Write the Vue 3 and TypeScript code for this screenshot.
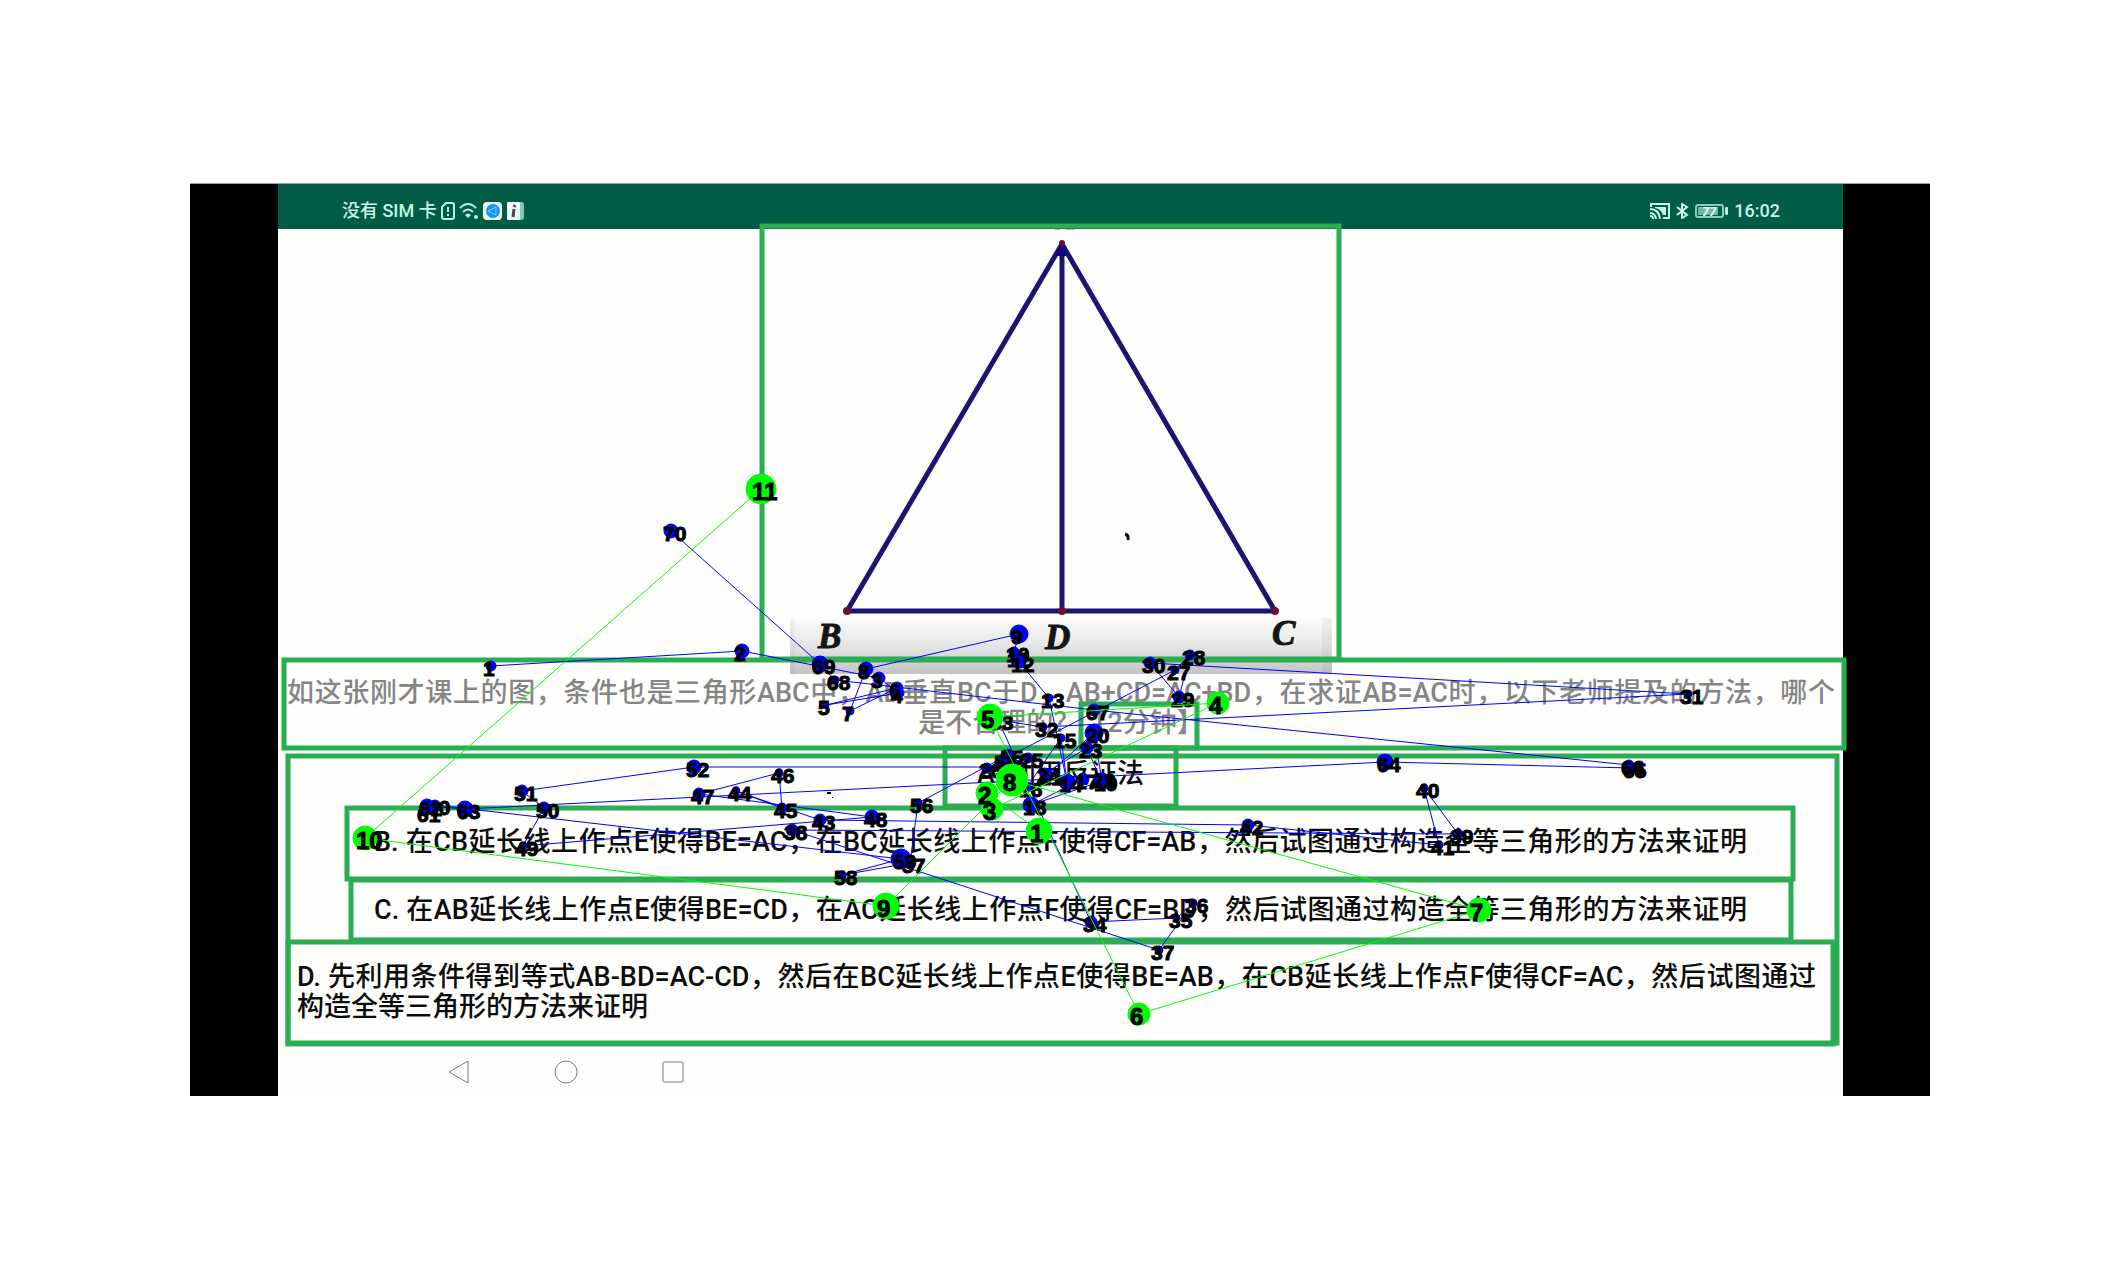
<script setup lang="ts">
interface Fixation {
  x: number
  y: number
  r: number
}

interface Area {
  name: string
  x: number
  y: number
  w: number
  h: number
}

interface Option {
  key: string
  lines: string[]
}

const toFixations = (rows: number[][]): Fixation[] => rows.map(([x, y, r]) => ({ x, y, r }))
const toPath = (items: Fixation[]): string => items.map((f) => `${f.x},${f.y}`).join(' ')

const questionLines: string[] = [
  '如这张刚才课上的图，条件也是三角形ABC中，AD垂直BC于D，AB+CD=AC+BD，在求证AB=AC时，以下老师提及的方法，哪个',
  '是不合理的？【2分钟】',
]

const options: Option[] = [
  { key: 'a', lines: ['A. 利用反证法'] },
  { key: 'b', lines: ['B. 在CB延长线上作点E使得BE=AC，在BC延长线上作点F使得CF=AB，然后试图通过构造全等三角形的方法来证明'] },
  { key: 'c', lines: ['C. 在AB延长线上作点E使得BE=CD，在AC延长线上作点F使得CF=BD，然后试图通过构造全等三角形的方法来证明'] },
  {
    key: 'd',
    lines: [
      'D. 先利用条件得到等式AB-BD=AC-CD，然后在BC延长线上作点E使得BE=AB，在CB延长线上作点F使得CF=AC，然后试图通过',
      '构造全等三角形的方法来证明',
    ],
  },
]

const areas: Area[] = [
  { name: 'figure', x: 762, y: 226, w: 577, h: 433 },
  { name: 'question', x: 284, y: 660, w: 1560, h: 88 },
  { name: 'time-limit', x: 1081, y: 704, w: 116, h: 44 },
  { name: 'options', x: 288, y: 756, w: 1549, h: 287 },
  { name: 'option-a', x: 945, y: 748, w: 231, h: 58 },
  { name: 'option-b', x: 347, y: 808, w: 1446, h: 71 },
  { name: 'option-c', x: 351, y: 880, w: 1440, h: 60 },
  { name: 'option-d', x: 288, y: 942, w: 1545, h: 102 },
]

const blue = toFixations([
  [491, 666, 5], [742, 651, 7], [879, 678, 6], [899, 693, 5], [826, 705, 3],
  [897, 688, 6], [850, 711, 4], [866, 669, 7], [1019, 634, 9], [1014, 652, 5],
  [1015, 657, 4], [1019, 662, 6], [1049, 698, 4], [1067, 782, 8], [1061, 738, 4],
  [1027, 787, 5], [1083, 779, 6], [1031, 805, 8], [1102, 781, 8], [1094, 733, 9],
  [1047, 775, 6], [1100, 778, 5], [1087, 748, 6], [1045, 773, 5], [1028, 758, 5],
  [987, 768, 5], [1175, 670, 4], [1190, 655, 5], [1179, 697, 6], [1150, 663, 6],
  [1688, 694, 4], [1043, 727, 4], [998, 720, 4], [1091, 922, 6], [1177, 918, 3],
  [1193, 903, 4], [1159, 950, 4], [792, 830, 6], [1458, 834, 5], [1424, 788, 4],
  [1439, 845, 4], [1248, 825, 6], [820, 820, 6], [736, 791, 4], [782, 808, 5],
  [779, 773, 4], [699, 794, 6], [872, 817, 7], [523, 846, 4], [544, 808, 6],
  [522, 791, 6], [694, 767, 7], [1004, 767, 5], [1002, 760, 5], [1008, 755, 6],
  [918, 803, 4], [910, 863, 4], [842, 875, 4], [901, 859, 10], [435, 805, 5],
  [425, 812, 4], [427, 806, 7], [465, 809, 8], [1385, 762, 8], [1631, 768, 5],
  [1629, 765, 5], [1094, 710, 6], [835, 680, 4], [820, 664, 8], [671, 531, 7],
])

const green = toFixations([
  [1039, 831, 13], [987, 793, 11], [992, 809, 11], [1218, 703, 11], [990, 717, 13],
  [1139, 1014, 11], [1479, 910, 12], [1012, 780, 16], [886, 906, 13], [365, 838, 12],
  [761, 489, 15],
])
</script>

<template>
  <main class="page">
    <div class="device">
      <section class="screen">
        <header class="status">
          <div class="status-group left">
            <span>没有 SIM 卡</span>
            <svg width="14" height="18" viewBox="0 0 14 18" fill="none" stroke="#b9f0de" stroke-width="2">
              <path d="M5 1h6a2 2 0 0 1 2 2v12a2 2 0 0 1-2 2H3a2 2 0 0 1-2-2V5z" />
              <path d="M7 5v5M7 12v2" />
            </svg>
            <svg width="20" height="18" viewBox="0 0 20 18" fill="none" stroke="#b9f0de" stroke-width="2">
              <path d="M1 6q8-8 16 0M4 10q5-5 10 0" />
              <path d="M6 13q3-3 6 0l-3 3z" fill="#b9f0de" stroke="none" />
              <circle cx="17" cy="15" r="2" fill="#b9f0de" stroke="none" />
            </svg>
            <svg width="19" height="18" viewBox="0 0 19 18">
              <rect width="19" height="18" rx="4" fill="#effffb" />
              <circle cx="10" cy="9" r="7" fill="#1593f2" />
              <path d="M5 9l8-4v8z" fill="none" stroke="#7fd6ff" stroke-width="1" />
            </svg>
            <svg width="18" height="18" viewBox="0 0 18 18">
              <rect x="3" width="15" height="18" rx="3" fill="#7fcbb5" />
              <rect x="1" width="13" height="18" rx="1" fill="#effffb" />
              <path d="M9 3l-1 2M8 7l-1 8" stroke="#3d4d48" stroke-width="3" />
            </svg>
          </div>
          <div class="status-group right">
            <svg width="20" height="16" viewBox="0 0 20 16" fill="none" stroke="#c6f5e6" stroke-width="2">
              <path d="M1 4V1h18v14h-6" />
              <path d="M5 4h11v8h-3Q11 6 5 5z" fill="#c6f5e6" stroke="none" />
              <path d="M0 6q9 0 10 10M0 10q5 0 6 6M0 13q3 0 3 3" />
            </svg>
            <svg width="13" height="16" viewBox="0 0 13 16" fill="none" stroke="#c6f5e6" stroke-width="2">
              <path d="M1 4l10 8-5 3V1l5 3L1 12" />
            </svg>
            <svg class="battery" width="33" height="14" viewBox="0 0 33 14">
              <rect x="1" y="1" width="27" height="12" rx="2" fill="none" stroke="#8bd0bb" stroke-width="2" />
              <rect x="3" y="3" width="20" height="8" fill="#72b9a5" />
              <rect x="30" y="3" width="3" height="8" rx="1" fill="#b9f0de" />
              <text x="7" y="12" class="battery-level">77</text>
            </svg>
            <time>16:02</time>
          </div>
        </header>

        <figure class="figure">
          <svg viewBox="790 229 542 445" role="img" aria-label="三角形ABC">
            <defs>
              <linearGradient id="shade" x1="0" y1="0" x2="0" y2="1">
                <stop offset="0" stop-color="#fefefd" />
                <stop offset="0.500" stop-color="#e8e7e7" />
                <stop offset="1" stop-color="#c4c2c2" />
              </linearGradient>
            </defs>
            <rect x="790" y="614" width="542" height="60" fill="url(#shade)" />
            <rect x="790" y="618" width="5" height="56" fill="#000" opacity="0.030" />
            <rect x="1322" y="618" width="10" height="56" fill="#000" opacity="0.040" />
            <path d="M1055 229h5M1066 229h9" stroke="#777" stroke-width="1" />
            <g class="edges">
              <path d="M1062 244L847 611H1275Z" />
              <path d="M1062 244V611" />
            </g>
            <path d="M1062 241l6 15h-12z" fill="#0c0880" />
            <g fill="#6b1030">
              <circle cx="1062" cy="243" r="3" />
              <circle cx="847" cy="611" r="4" />
              <circle cx="1062" cy="611" r="4" />
              <circle cx="1275" cy="611" r="4" />
            </g>
            <path d="M1125 534q4 1 3 6" fill="none" stroke="#111" stroke-width="3" />
            <text class="vertex" x="818" y="648">B</text>
            <text class="vertex" x="1045" y="649">D</text>
            <text class="vertex" x="1272" y="645">C</text>
          </svg>
        </figure>

        <h1 class="question">
          <span v-for="(line, i) in questionLines" :key="i" class="line">{{ line }}</span>
        </h1>

        <div class="options">
          <button v-for="option in options" :key="option.key" type="button" class="option" :class="option.key">
            <span v-for="(line, i) in option.lines" :key="i" class="line">{{ line }}</span>
          </button>
        </div>

        <nav class="nav">
          <button type="button" aria-label="返回">
            <svg width="24" height="24" viewBox="0 0 24 24"><path d="M21 1v22L2 12z" /></svg>
          </button>
          <button type="button" aria-label="主页">
            <svg width="24" height="24" viewBox="0 0 24 24"><circle cx="12" cy="12" r="11" /></svg>
          </button>
          <button type="button" aria-label="最近任务">
            <svg width="24" height="24" viewBox="0 0 24 24"><rect x="2" y="2" width="20" height="20" rx="1" /></svg>
          </button>
        </nav>
      </section>

      <svg class="gaze" viewBox="190 184 1740 912">
        <rect v-for="area in areas" :key="area.name" class="area" :x="area.x" :y="area.y" :width="area.w" :height="area.h" />
        <path d="M827 792h4v2h-4zM832 797h1v1h-1z" />
        <polyline class="trail blue" :points="toPath(blue)" />
        <g v-for="(f, i) in blue" :key="`b${i}`">
          <circle class="blue" :cx="f.x" :cy="f.y" :r="f.r" />
          <text :x="f.x - 8" :y="f.y + 10">{{ i + 1 }}</text>
        </g>
        <g class="large">
          <circle v-for="(f, i) in green" :key="`c${i}`" class="green" :cx="f.x" :cy="f.y" :r="f.r" />
          <polyline class="trail green" :points="toPath(green)" />
          <text v-for="(f, i) in green" :key="`g${i}`" :x="f.x - 9" :y="f.y + 11">{{ i + 1 }}</text>
        </g>
      </svg>
    </div>
  </main>
</template>

<style>
body {
  background: #fff;
}
</style>

<style scoped>
.page {
  padding: 184px 190px;
  font-family: Roboto, "Noto Sans CJK SC", sans-serif;
}

.device {
  position: relative;
  padding: 0 87px 0 88px;
  background: #000;
  box-shadow: 0 -1px #a0a0a0;
}

.screen {
  background: #fefefd;
}

.status {
  display: flex;
  align-items: center;
  justify-content: space-between;
  box-sizing: border-box;
  height: 45px;
  padding: 8px 63px 0 64px;
  background: #005c45;
  color: #c6f5e6;
  font-size: 18px;
  font-weight: 500;
  line-height: 24px;
}

.status-group {
  display: flex;
  align-items: center;
}

.left {
  gap: 4px;
}

.right {
  gap: 6px;
}

.battery-level {
  fill: #e4fff7;
  font-size: 13px;
  font-style: italic;
  font-weight: 700;
}

.figure {
  display: flex;
  justify-content: center;
  margin: 0;
}

.figure svg {
  display: block;
  width: 100%;
  max-width: 542px;
}

.edges {
  fill: none;
  stroke: #1c1470;
  stroke-width: 5px;
  stroke-linejoin: round;
}

.vertex {
  fill: #151515;
  stroke: #151515;
  stroke-width: 1px;
  font-family: "Liberation Serif", serif;
  font-size: 35px;
  font-style: italic;
  font-weight: 700;
}

.question {
  margin: 0;
  padding: 4px 8px 12px 9px;
  color: #858585;
  font-size: 27px;
  font-weight: 500;
  line-height: 30px;
  text-align: center;
}

.line {
  display: block;
}

.question .line:first-child,
.b .line,
.c .line,
.d .line:first-child {
  text-align: justify;
  text-align-last: justify;
}

.options {
  display: flex;
  flex-direction: column;
}

.option {
  border: 0;
  background: none;
  color: #0c0c0c;
  font-family: inherit;
  font-size: 27px;
  font-weight: 500;
  line-height: 30px;
  text-align: center;
}

.a {
  padding: 9px 0 18px;
}

.b {
  padding: 20px 96px;
}

.c {
  padding: 18px 96px;
}

.d {
  padding: 19px 27px 21px 19px;
  text-align: left;
}

.nav {
  display: flex;
  gap: 83px;
  padding: 17px 169px 12px;
}

.nav button {
  display: block;
  padding: 0;
  border: 0;
  background: none;
}

.nav svg {
  display: block;
  fill: none;
  stroke: #7c7c7c;
  stroke-width: 1px;
  stroke-linejoin: round;
}

.gaze {
  position: absolute;
  inset: 0;
  width: 100%;
  height: 100%;
  overflow: visible;
  pointer-events: none;
}

.gaze text {
  fill: #000;
  stroke: #000;
  stroke-width: 1px;
  font-family: "Liberation Sans", sans-serif;
  font-size: 21px;
  font-weight: 700;
}

.gaze .large text {
  font-size: 24px;
}

.area {
  fill: none;
  stroke: #2bad52;
  stroke-width: 5px;
}

.blue {
  fill: #0000ff;
  stroke: #0000ff;
}

.green {
  fill: #00ff00;
  stroke: #00ff00;
}

.trail {
  fill: none;
  stroke-width: 1px;
}
</style>
